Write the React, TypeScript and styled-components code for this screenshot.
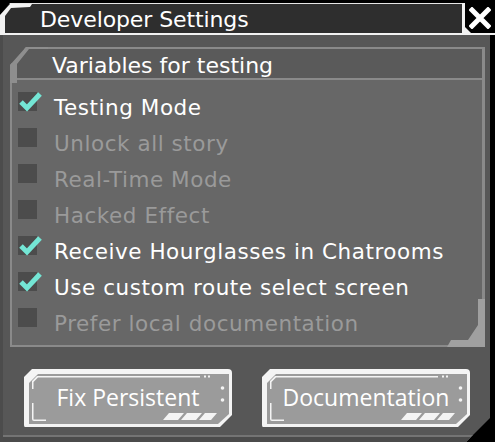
import React from "react";
import styled, { createGlobalStyle } from "styled-components";

const GlobalStyle = createGlobalStyle`
  html, body {
    margin: 0;
    padding: 0;
    background: #000;
  }
`;

const Frame = styled.div`
  width: 495px;
  height: 442px;
  padding-top: 3px;
  box-sizing: border-box;
  background: #000;
  display: flex;
  flex-direction: column;
  font-family: "DejaVu Sans", sans-serif;
`;

const TitleRow = styled.div`
  display: flex;
  height: 30px;
  border-bottom: 2px solid #f2f2f2;
`;

const TitleBar = styled.div`
  position: relative;
  flex: 1;
  background: #2e2e2e;
  border-top: 1px solid #e6e6e6;
  color: #fff;
  font-size: 22px;
  letter-spacing: -0.1px;
  line-height: 31px;
  padding-left: 40px;
`;

const CornerMark = styled.svg`
  position: absolute;
  left: 0;
  top: -1px;
`;

const CloseButton = styled.button`
  position: relative;
  width: 33px;
  padding: 0;
  border: none;
  border-left: 3px solid #f2f2f2;
  background: #000;
  display: flex;
  align-items: center;
  justify-content: center;
`;

const CloseNotch = styled.svg`
  position: absolute;
  left: -3px;
  bottom: -2px;
`;

const Body = styled.div`
  flex: 1;
  width: 490px;
  box-sizing: border-box;
  background: #575757;
  border-left: 3px solid #4c4c4c;
  padding: 12px 5px 0 7px;
  box-shadow: inset 0 -5px 0 #4b4b4b, inset 0 -7px 0 #747474;
  clip-path: polygon(0 0, 100% 0, 100% calc(100% - 24px), calc(100% - 24px) 100%, 0 100%);
`;

const Panel = styled.div`
  position: relative;
  height: 300px;
  box-sizing: border-box;
  background: #676767;
  border: 2px solid #8a8a8a;
  border-right-width: 3px;
  display: flex;
  flex-direction: column;
`;

const PanelHeader = styled.div`
  height: 26px;
  padding: 3px 0 0 40px;
  background: #5a5a5a;
  border-bottom: 2px solid #8a8a8a;
  color: #fff;
  font-size: 22px;
  line-height: 28px;
`;

const PanelCorner = styled.svg`
  position: absolute;
  left: -2px;
  top: -2px;
`;

const PanelFoot = styled.svg`
  position: absolute;
  right: -3px;
  bottom: -2px;
`;

const List = styled.div`
  display: flex;
  flex-direction: column;
  padding: 12px 0 0 6px;
`;

const Row = styled.div`
  display: flex;
  align-items: flex-start;
  height: 36px;
`;

const Box = styled.span`
  position: relative;
  width: 19px;
  height: 19px;
  flex: none;
  background: #4c4c4c;
`;

const Tick = styled.svg`
  position: absolute;
  left: 0;
  top: -1px;
`;

const Label = styled.span<{ $enabled: boolean }>`
  margin-left: 17px;
  padding-top: 4px;
  font-size: 21.5px;
  line-height: 24px;
  letter-spacing: 0.55px;
  white-space: nowrap;
  color: ${(p) => (p.$enabled ? "#ffffff" : "#9a9a9a")};
`;

const Actions = styled.div`
  display: flex;
  gap: 30px;
  padding: 22px 0 0 14px;
`;

const ActionButton = styled.button`
  position: relative;
  width: 208px;
  height: 58px;
  padding: 0;
  border: none;
  background: none;
  font-family: "Open Sans", sans-serif;
  font-size: 23px;
  color: #fff;
  display: flex;
  align-items: center;
  justify-content: center;
`;

const ButtonFrame = styled.svg`
  position: absolute;
  left: 0;
  top: 0;
`;

const ButtonText = styled.span`
  position: relative;
  margin-top: -2px;
`;

const options = [
  { label: "Testing Mode", enabled: true, checked: true },
  { label: "Unlock all story", enabled: false, checked: false },
  { label: "Real-Time Mode", enabled: false, checked: false },
  { label: "Hacked Effect", enabled: false, checked: false },
  { label: "Receive Hourglasses in Chatrooms", enabled: true, checked: true },
  { label: "Use custom route select screen", enabled: true, checked: true },
  { label: "Prefer local documentation", enabled: false, checked: false },
];

function FrameArt() {
  return (
    <ButtonFrame width="208" height="58" viewBox="0 0 208 58">
      <path d="M8 0 H204 Q208 0 208 4 V46 L196 58 H1 Q0 58 0 56 V8 Z" fill="#f4f4f4" />
      <path d="M14 5 H205 V45 L194 55 H5 V14 Z" fill="#9b9b9b" />
      <path d="M8 12 L13 7 H176 V8.5 H14 L9.5 13 V20 H8 Z" fill="#f4f4f4" />
      <path d="M8 34 V50 Q8 52 10 52 H22 V50.5 H10 Q9.5 50.5 9.5 50 V34 Z" fill="#f4f4f4" />
      <rect x="180" y="6.5" width="2" height="2" fill="#f4f4f4" />
      <rect x="184" y="6.5" width="2" height="2" fill="#f4f4f4" />
      <circle cx="198.5" cy="19" r="1.8" fill="#f4f4f4" />
      <circle cx="198.5" cy="31" r="1.8" fill="#f4f4f4" />
      <path d="M139 51 L145 44 H160 L154 51 Z" fill="#f4f4f4" />
      <path d="M157 51 L163 44 H178 L172 51 Z" fill="#f4f4f4" />
      <path d="M175 51 L181 44 H193 L187 51 Z" fill="#f4f4f4" />
    </ButtonFrame>
  );
}

function App() {
  return (
    <Frame>
      <GlobalStyle />
      <TitleRow>
        <TitleBar>
          <CornerMark width="34" height="32" viewBox="0 0 34 32">
            <polygon points="0,0 10,0 0,12" fill="#000" />
            <polygon points="0,12 10,1 32,1 30,4 11,5 5,13 5,31 0,31" fill="#f2f2f2" />
          </CornerMark>
          Developer Settings
        </TitleBar>
        <CloseButton aria-label="Close">
          <CloseNotch width="9" height="8" viewBox="0 0 9 8">
            <polygon points="0,0 3,0 9,6 9,8 0,8" fill="#f2f2f2" />
          </CloseNotch>
          <svg width="22" height="22" viewBox="0 0 22 22">
            <path d="M3 3 L19 19 M19 3 L3 19" stroke="#fff" strokeWidth="5" strokeLinecap="square" />
          </svg>
        </CloseButton>
      </TitleRow>
      <Body>
        <Panel>
          <PanelCorner width="38" height="36" viewBox="0 0 38 36">
            <polygon points="0,0 16,0 0,18" fill="#575757" />
            <polygon points="0,18 16,0 38,0 38,2 19,2 7,17 7,36 0,36" fill="#8e8e8e" />
          </PanelCorner>
          <PanelHeader>Variables for testing</PanelHeader>
          <List>
            {options.map((o) => (
              <Row key={o.label}>
                <Box>
                  {o.checked && (
                    <Tick width="26" height="22" viewBox="0 0 26 22">
                      <path d="M3 11 L9 17 L22 3" stroke="#74e6d5" strokeWidth="5" fill="none" strokeLinejoin="miter" />
                    </Tick>
                  )}
                </Box>
                <Label $enabled={o.enabled}>{o.label}</Label>
              </Row>
            ))}
          </List>
          <PanelFoot width="38" height="48" viewBox="0 0 38 48">
            <polygon points="31,0 38,0 38,48 0,48 4,41 21,41 31,26" fill="#a0a0a0" />
          </PanelFoot>
        </Panel>
        <Actions>
          <ActionButton>
            <FrameArt />
            <ButtonText>Fix Persistent</ButtonText>
          </ActionButton>
          <ActionButton>
            <FrameArt />
            <ButtonText>Documentation</ButtonText>
          </ActionButton>
        </Actions>
      </Body>
    </Frame>
  );
}

export default App;
